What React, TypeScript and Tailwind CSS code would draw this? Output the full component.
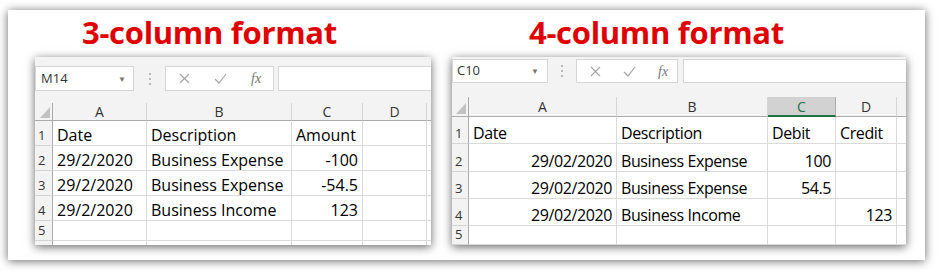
import React from "react";

const cellFont = { fontFamily: '"Open Sans", "Liberation Sans", sans-serif' };

const Cross = () => (
  <svg width="11" height="11" viewBox="0 0 11 11">
    <path d="M1 1 L10 10 M10 1 L1 10" stroke="#a6a6a6" strokeWidth="1.2" fill="none" />
  </svg>
);

const Check = () => (
  <svg width="13" height="11" viewBox="0 0 13 11">
    <path d="M1 6 L5 10 L12 1" stroke="#a6a6a6" strokeWidth="1.2" fill="none" />
  </svg>
);

const Dots = () => (
  <div className="flex flex-col gap-[3px]">
    <span className="w-[2px] h-[2px] bg-[#b8b8b8]" />
    <span className="w-[2px] h-[2px] bg-[#b8b8b8]" />
    <span className="w-[2px] h-[2px] bg-[#b8b8b8]" />
  </div>
);

const Corner = () => (
  <div className="relative bg-[#f3f3f3] border-r border-b border-[#ababab]">
    <svg className="absolute right-[2px] bottom-[2px]" width="10" height="11" viewBox="0 0 10 11">
      <path d="M10 0 L10 11 L0 11 Z" fill="#c2c2c2" />
    </svg>
  </div>
);

const ColHead = ({ label, selected }: { label: string; selected?: boolean }) => (
  <div
    className={
      selected
        ? "flex items-center justify-center bg-[#d2d2d2] border-r border-[#ababab] border-b-2 border-b-[#217346] text-[14px] text-[#217346]"
        : "flex items-center justify-center bg-[#f3f3f3] border-r border-[#d4d4d4] border-b border-b-[#ababab] text-[14px] text-[#333]"
    }
  >
    {label}
  </div>
);

const RowHead = ({ n }: { n: string }) => (
  <div className="flex items-end pl-[3px] pb-[3px] bg-[#f3f3f3] border-r border-[#ababab] border-b border-b-[#d4d4d4] text-[13px] leading-[13px] text-[#333]">
    {n}
  </div>
);

const Cell = ({ text = "", right, tight }: { text?: string; right?: boolean; tight?: boolean }) => (
  <div
    className={
      "flex items-end overflow-hidden whitespace-nowrap border-r border-b border-[#dadada] px-[4px] pb-[2px] text-[16px] leading-[16px] text-[#000] " +
      (right ? "justify-end " : "") +
      (tight ? "tracking-[-0.4px]" : "")
    }
  >
    {text}
  </div>
);

const LeftSheet = () => {
  const rows = [
    ["1", "Date", "Description", "Amount", ""],
    ["2", "29/2/2020", "Business Expense", "-100", ""],
    ["3", "29/2/2020", "Business Expense", "-54.5", ""],
    ["4", "29/2/2020", "Business Income", "123", ""],
    ["5", "", "", "", ""],
  ];
  return (
    <div className="w-[396px] h-[188px] bg-white flex flex-col shadow-[0_2px_9px_rgba(0,0,0,0.6)]" style={cellFont}>
      <div className="h-[46px] bg-[#f3f3f3] pt-[9px]">
        <div className="h-[25px] flex items-stretch">
          <div className="w-[99px] bg-white border border-[#d6d6d6] flex items-center justify-between pl-[5px] pr-[7px] text-[13px] text-[#333]">
            <span>M14</span>
            <span className="text-[8px] text-[#777]">▼</span>
          </div>
          <div className="w-[31px] flex items-center justify-center">
            <Dots />
          </div>
          <div className="w-[109px] bg-white border border-[#d6d6d6] flex items-center pl-[13px] gap-[24px]">
            <Cross />
            <Check />
            <span className="italic text-[14px] text-[#777]" style={{ fontFamily: '"Liberation Serif", serif' }}>
              fx
            </span>
          </div>
          <div className="w-[4px]" />
          <div className="flex-1 bg-white border border-r-0 border-[#d6d6d6]" />
        </div>
      </div>
      <div className="grid grid-cols-[18px_94px_145px_71px_64px_4px] grid-rows-[18px_25px_25px_25px_25px_20px_4px]">
        <Corner />
        <ColHead label="A" />
        <ColHead label="B" />
        <ColHead label="C" />
        <ColHead label="D" />
        <div className="bg-[#f3f3f3] border-b border-[#ababab]" />
        {rows.map((r) => (
          <React.Fragment key={r[0]}>
            <RowHead n={r[0]} />
            <Cell text={r[1]} />
            <Cell text={r[2]} />
            <Cell text={r[3]} right={r[0] !== "1"} />
            <Cell text={r[4]} />
            <div className="border-b border-[#dadada]" />
          </React.Fragment>
        ))}
        <div className="bg-[#f3f3f3] border-r border-[#ababab]" />
        <div className="border-r border-[#dadada]" />
        <div className="border-r border-[#dadada]" />
        <div className="border-r border-[#dadada]" />
        <div className="border-r border-[#dadada]" />
        <div />
      </div>
    </div>
  );
};

const RightSheet = () => {
  const rows = [
    ["1", "Date", "Description", "Debit", "Credit"],
    ["2", "29/02/2020", "Business Expense", "100", ""],
    ["3", "29/02/2020", "Business Expense", "54.5", ""],
    ["4", "29/02/2020", "Business Income", "", "123"],
    ["5", "", "", "", ""],
  ];
  return (
    <div className="w-[454px] h-[188px] bg-white flex flex-col shadow-[0_2px_9px_rgba(0,0,0,0.6)]" style={cellFont}>
      <div className="h-[40px] bg-[#f3f3f3] pt-[2px]">
        <div className="h-[24px] flex items-stretch">
          <div className="w-[96px] bg-white border border-[#d6d6d6] flex items-center justify-between pl-[4px] pr-[8px] text-[13px] text-[#333]">
            <span>C10</span>
            <span className="text-[8px] text-[#777]">▼</span>
          </div>
          <div className="w-[28px] flex items-center justify-center">
            <Dots />
          </div>
          <div className="w-[102px] bg-white border border-[#d6d6d6] flex items-center pl-[13px] gap-[22px]">
            <Cross />
            <Check />
            <span className="italic text-[14px] text-[#777]" style={{ fontFamily: '"Liberation Serif", serif' }}>
              fx
            </span>
          </div>
          <div className="w-[5px]" />
          <div className="flex-1 bg-white border border-r-0 border-[#d6d6d6]" />
        </div>
      </div>
      <div className="grid grid-cols-[17px_148px_151px_68px_61px_9px] grid-rows-[20px_27px_28px_27px_27px_19px]">
        <Corner />
        <ColHead label="A" />
        <ColHead label="B" />
        <ColHead label="C" selected />
        <ColHead label="D" />
        <div className="bg-[#f3f3f3] border-b border-[#ababab]" />
        {rows.map((r) => (
          <React.Fragment key={r[0]}>
            <RowHead n={r[0]} />
            <Cell text={r[1]} right={r[0] !== "1"} tight />
            <Cell text={r[2]} tight />
            <Cell text={r[3]} right={r[0] !== "1"} tight />
            <Cell text={r[4]} right={r[0] !== "1"} tight />
            <div className="border-b border-[#dadada]" />
          </React.Fragment>
        ))}
      </div>
    </div>
  );
};

const Title = ({ children, pad }: { children: React.ReactNode; pad: string }) => (
  <div
    className={"h-[47px] pt-[7px] text-[31px] leading-[30px] font-bold tracking-[-0.3px] text-[#e00000] whitespace-nowrap " + pad}
    style={{ fontFamily: '"Open Sans", sans-serif' }}
  >
    {children}
  </div>
);

export default function App() {
  return (
    <div className="w-[938px] h-[274px] bg-white pt-[10px] pl-[8px]">
      <div className="w-[917px] h-[250px] bg-white flex pl-[27px] shadow-[0_1px_9px_rgba(0,0,0,0.6)]">
        <div className="flex flex-col w-[396px]">
          <Title pad="pl-[47px]">3-column format</Title>
          <LeftSheet />
        </div>
        <div className="flex flex-col w-[454px] ml-[21px]">
          <Title pad="pl-[77px]">4-column format</Title>
          <RightSheet />
        </div>
      </div>
    </div>
  );
}
